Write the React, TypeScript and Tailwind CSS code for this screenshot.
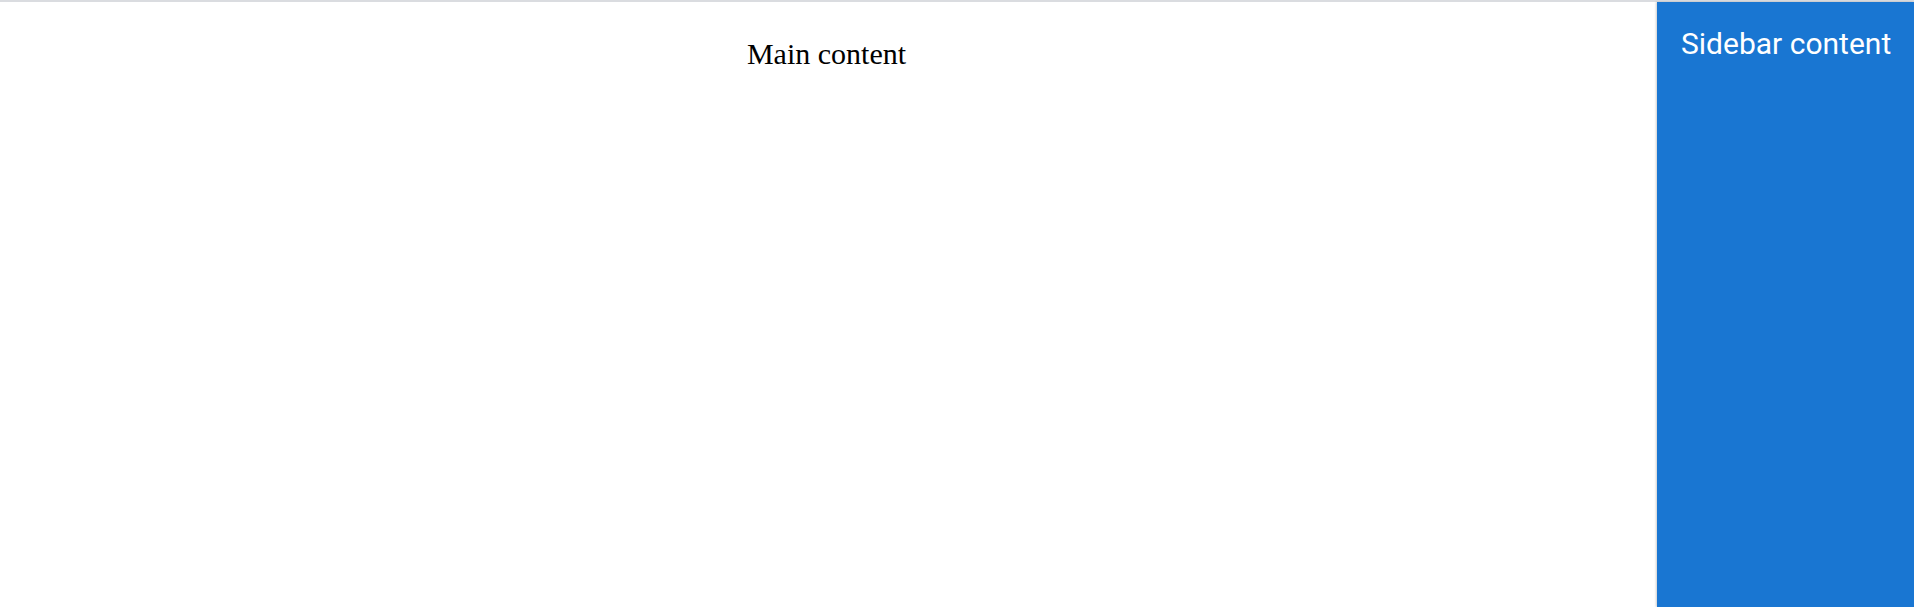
export default function App() {
  return (
    <div className="w-[1914px] h-[607px] flex flex-col bg-white overflow-hidden">
      <div className="h-[2px] bg-[#dadce0] shrink-0" />
      <div className="flex flex-1 min-h-0">
        <main className="flex-1 pt-[29px] pr-[4px] text-center text-black text-[30px] leading-normal" style={{ fontFamily: '"Liberation Serif", serif' }}>
          Main content
        </main>
        <aside className="w-[257px] shrink-0 bg-[#1976d2] text-white pt-[19px] px-6 shadow-[-1px_0_2px_rgba(0,0,0,0.2)]" style={{ fontFamily: 'Roboto, sans-serif' }}>
          <div className="text-[30px] leading-normal whitespace-nowrap">Sidebar content</div>
        </aside>
      </div>
    </div>
  );
}
